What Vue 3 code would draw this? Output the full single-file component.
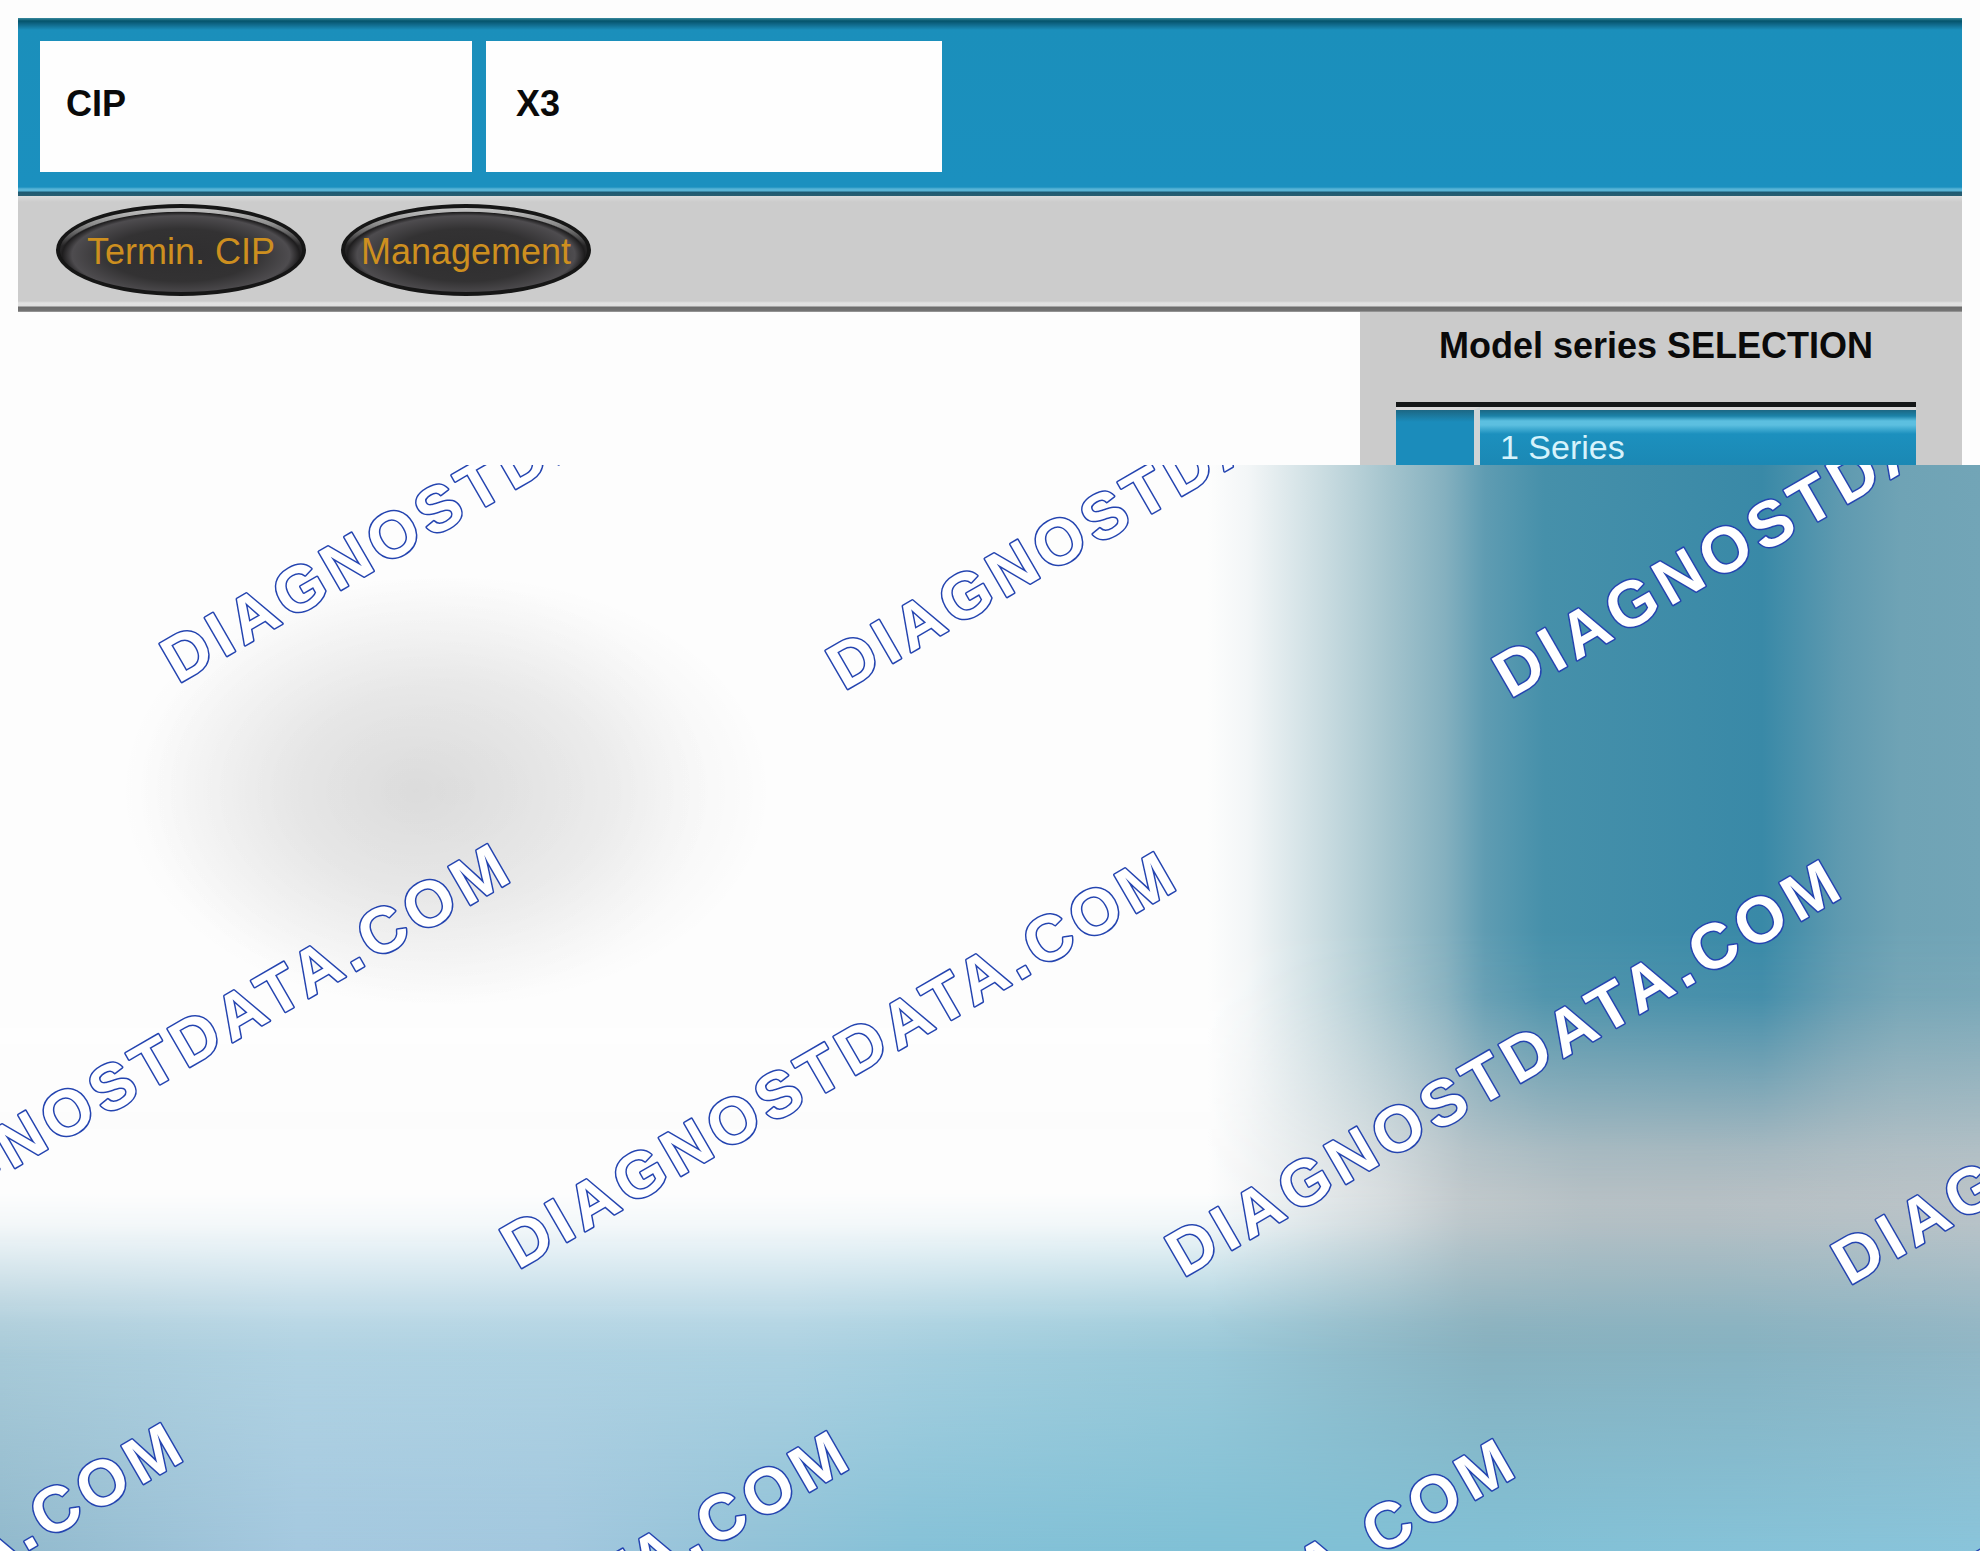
<script setup>
const fields = ['CIP', 'X3']
const actions = ['Termin. CIP', 'Management']
const series = ['1 Series']

const brand = 'DIAGNOSTDATA.COM'
const marks = [
  [178, 219], [844, 226], [1510, 234],
  [-148, 797], [518, 805], [1183, 813], [1849, 821],
  [-475, 1376], [191, 1384], [857, 1392], [1523, 1400],
]
</script>

<template>
  <main class="page">
    <section class="screen">
      <header class="titlebar">
        <div v-for="field in fields" :key="field" class="field">{{ field }}</div>
      </header>
      <nav class="toolbar">
        <button v-for="action in actions" :key="action" type="button" class="oval">{{ action }}</button>
      </nav>
      <div class="content">
        <aside class="panel">
          <h1>Model series SELECTION</h1>
          <table>
            <tbody>
              <tr v-for="name in series" :key="name">
                <td class="marker"></td>
                <td class="name">{{ name }}</td>
              </tr>
            </tbody>
          </table>
        </aside>
      </div>
    </section>

    <section class="preview">
      <div class="tone floor"></div>
      <div class="tone low"></div>
      <div class="tone middle"></div>
      <div class="tone top"></div>
      <div class="tone smudge"></div>
      <svg class="marks" width="100%" height="100%">
        <text v-for="([x, y], i) in marks" :key="i" :transform="`translate(${x} ${y}) rotate(-30)`">{{ brand }}</text>
      </svg>
    </section>
  </main>
</template>

<style>
body {
  margin: 0;
  background: #fdfdfd;
}
</style>

<style scoped>
.page {
  display: flex;
  flex-direction: column;
  min-height: 100vh;
  background: #fdfdfd;
  font-family: "Liberation Sans", Arial, sans-serif;
  font-size: 36px;
}

.screen {
  padding: 18px 18px 0;
}

.titlebar {
  display: flex;
  gap: 14px;
  box-sizing: border-box;
  height: 178px;
  padding: 23px 22px 24px;
  background: linear-gradient(#3a8ca0 0, #04546c 3px, #0f6686 6px, #1b8fbb 12px, #1b90bf calc(100% - 12px), #1b90bf calc(100% - 9px), #58b4d6 calc(100% - 7px), #58b4d6 calc(100% - 5px), #1d5a72 calc(100% - 4px), #2a5f72 100%);
}

.field {
  box-sizing: border-box;
  width: 456px;
  padding: 0 30px 6px;
  display: flex;
  align-items: center;
  background: #fefefe;
  color: #0a0a0a;
  font-weight: bold;
}

.field:first-child {
  width: 432px;
  padding-left: 26px;
}

.toolbar {
  display: flex;
  gap: 35px;
  box-sizing: border-box;
  height: 116px;
  padding: 8px 38px 0;
  background: linear-gradient(#dcdcdc 0, #cccccc 6px, #cccccc calc(100% - 11px), #e2e2e2 calc(100% - 9px), #dedede calc(100% - 6px), #6c6c6c calc(100% - 5px), #747474 calc(100% - 1px), #b0b0b0 100%);
}

.oval {
  width: 250px;
  height: 92px;
  padding: 4px 0 0;
  border: 4px solid #161616;
  border-radius: 50%;
  background:
    radial-gradient(ellipse 50% 52% at 50% 56%, #2f2e2f 0, #333233 60%, #4e4c4f 90%, #1e1d1e 98%, transparent 100%),
    linear-gradient(#c4c4c4, #8a8a8a 20%, #262526 45%);
  color: #cd8f1f;
  font: 36px "Liberation Sans", Arial, sans-serif;
  white-space: nowrap;
}

.content {
  display: flex;
  justify-content: flex-end;
}

.panel {
  box-sizing: border-box;
  width: 602px;
  height: 153px;
  padding: 12px 46px 0 36px;
  background: #cbcbcb;
}

h1 {
  margin: 0 0 34px;
  color: #0a0a0a;
  font-size: 36px;
  line-height: 44px;
  text-align: center;
}

table {
  width: 100%;
  border-spacing: 0;
  border-top: 5px solid #141718;
}

td {
  height: 58px;
  padding: 0;
  border-top: 3px solid #dadada;
  box-sizing: border-box;
}

.marker {
  width: 84px;
  border-right: 6px solid #cfd4d6;
  background: linear-gradient(#1c6784, #1b8cbb 12px) padding-box;
}

.name {
  padding: 19px 0 0 20px;
  background: linear-gradient(#1c6784 0, #1c82a8 6px, #5cbfe0 11px, #5cbfe0 15px, #1c90be 24px, #1b88b4 100%) padding-box;
  color: #d6f3fc;
  font-size: 34px;
  line-height: 36px;
}

.preview {
  position: relative;
  flex: 1;
  overflow: hidden;
}

.tone,
.marks {
  position: absolute;
  inset: 0;
}

.floor {
  background: linear-gradient(90deg, #92bacd 0%, #98bfd3 5%, #a5c9e0 15%, #a3c8df 28%, #93c3d8 38%, #86c2d8 46%, #80c1d6 61%, #82c1d6 76%, #8ac5db 100%);
}

.low {
  background: linear-gradient(90deg, #a8cad8 0%, #b0d2e2 15%, #acd1e1 40%, #a1cddd 50%, #99c8d8 61%, #90bccb 68%, #87b1bf 75%, #86b2c1 88%, #90b6c5 100%);
  mask-image: linear-gradient(#000 81%, transparent 100%);
}

.middle {
  background: linear-gradient(90deg, #fdfdfd 61%, #eceff0 65%, #d8dddf 70%, #c2c9cc 74%, #b8c1c5 80%, #b8c0c4 86%, #bcc4c8 100%);
  mask-image: linear-gradient(#000 67%, rgb(0 0 0 / 88%) 70%, rgb(0 0 0 / 12%) 79%, transparent 82%);
}

.top {
  background: linear-gradient(90deg, #fdfdfd 61%, #f3f6f7 63%, #c8dbe0 67%, #a6c5ce 70%, #84b0bf 73%, #5f9cb2 75%, #4690aa 78%, #3989a7 89%, #5f9ab0 93%, #6fa3b5 96%, #72a5b7 100%);
  mask-image: linear-gradient(#000 43%, rgb(0 0 0 / 90%) 49%, rgb(0 0 0 / 15%) 63%, transparent 68%);
}

.smudge {
  background:
    radial-gradient(ellipse 15% 20% at 21% 30%, rgb(0 0 0 / 9%), rgb(0 0 0 / 5%) 45%, rgb(0 0 0 / 1%) 85%, transparent),
    radial-gradient(ellipse 16% 20% at 23% 30%, rgb(0 0 0 / 5%), rgb(0 0 0 / 4%) 50%, rgb(0 0 0 / 1%) 88%, transparent);
}

.marks text {
  fill: #ffffff;
  stroke: #2444b0;
  stroke-width: 3px;
  stroke-linejoin: round;
  paint-order: stroke;
  font-size: 64px;
  font-weight: bold;
  letter-spacing: 6px;
}
</style>
